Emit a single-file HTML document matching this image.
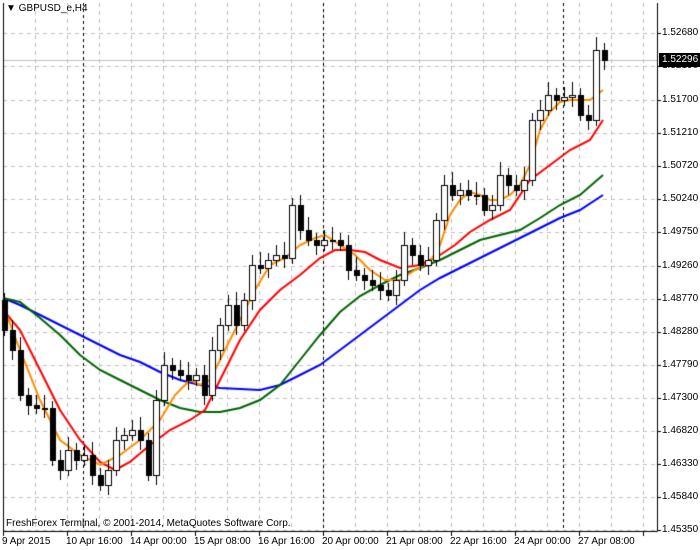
<!DOCTYPE html>
<html><head><meta charset="utf-8"><style>
body{margin:0;width:700px;height:550px;overflow:hidden;background:#fff;font-family:"Liberation Sans",sans-serif;}
canvas{position:absolute;left:0;top:0}
.t{position:absolute;font-size:10px;color:#000;white-space:nowrap;line-height:12px}
.pl{left:662px}
</style></head><body>
<canvas id="c" width="700" height="550"></canvas>
<div class="t" style="left:6px;top:3px">&#9660; GBPUSD_e,H4</div>
<div class="t pl" style="top:27px">1.52680</div>
<div class="t pl" style="top:60px">1.52190</div>
<div class="t pl" style="top:94px">1.51700</div>
<div class="t pl" style="top:127px">1.51210</div>
<div class="t pl" style="top:160px">1.50720</div>
<div class="t pl" style="top:193px">1.50240</div>
<div class="t pl" style="top:226px">1.49750</div>
<div class="t pl" style="top:260px">1.49260</div>
<div class="t pl" style="top:293px">1.48770</div>
<div class="t pl" style="top:326px">1.48280</div>
<div class="t pl" style="top:359px">1.47790</div>
<div class="t pl" style="top:392px">1.47300</div>
<div class="t pl" style="top:425px">1.46820</div>
<div class="t pl" style="top:458px">1.46330</div>
<div class="t pl" style="top:491px">1.45840</div>
<div class="t pl" style="top:524px">1.45350</div>
<div class="t" style="left:659px;top:53px;width:38px;height:14px;background:#000;color:#fff;padding-left:3px;line-height:14px">1.52296</div>
<div class="t" style="left:6px;top:518px">FreshForex Terminal, © 2001-2014, MetaQuotes Software Corp.</div>
<div class="t" style="left:2px;top:536px">9 Apr 2015</div>
<div class="t" style="left:66px;top:536px">10 Apr 16:00</div>
<div class="t" style="left:130px;top:536px">14 Apr 00:00</div>
<div class="t" style="left:194px;top:536px">15 Apr 08:00</div>
<div class="t" style="left:258px;top:536px">16 Apr 16:00</div>
<div class="t" style="left:322px;top:536px">20 Apr 00:00</div>
<div class="t" style="left:386px;top:536px">21 Apr 08:00</div>
<div class="t" style="left:450px;top:536px">22 Apr 16:00</div>
<div class="t" style="left:514px;top:536px">24 Apr 00:00</div>
<div class="t" style="left:578px;top:536px">27 Apr 08:00</div>
<script>
const c=document.getElementById('c').getContext('2d');
const L=3,R=657,T=3,B=531;
c.fillStyle='#fff';c.fillRect(0,0,700,550);
c.strokeStyle='#c0c0c0';c.lineWidth=1;c.setLineDash([4,4]);
for(let x=35;x<R;x+=32){c.beginPath();c.moveTo(x+.5,T);c.lineTo(x+.5,B);c.stroke();}
const ys=[33,66,100,133,166,199,232,266,299,332,365,398,431,464,497,530];
for(const y of ys){c.beginPath();c.moveTo(L,y+.5);c.lineTo(R,y+.5);c.stroke();}
c.strokeStyle='#000';c.setLineDash([3,3]);
for(const x of [83,323,563]){c.beginPath();c.moveTo(x+.5,T);c.lineTo(x+.5,B);c.stroke();}
c.setLineDash([]);
c.strokeStyle='#c0c0c0';c.beginPath();c.moveTo(L,60.5);c.lineTo(R,60.5);c.stroke();
c.strokeStyle='#000';c.beginPath();c.moveTo(L+.5,T);c.lineTo(L+.5,B+.5);c.lineTo(R+.5,B+.5);c.lineTo(R+.5,T);c.stroke();
for(const y of ys){c.beginPath();c.moveTo(R,y+.5);c.lineTo(R+4,y+.5);c.stroke();}
for(let x=3;x<R;x+=64){c.beginPath();c.moveTo(x+.5,B);c.lineTo(x+.5,B+5);c.stroke();}
const cl=[330,350,395,405,408,408,460,470,450,460,455,475,485,470,440,435,430,440,475,400,365,370,375,380,375,395,350,325,305,325,300,265,268,260,255,258,205,230,240,245,240,240,245,270,275,280,285,290,295,280,245,255,265,260,220,185,195,190,195,195,210,205,175,185,190,180,120,110,95,100,97,95,115,120,50,60];
const blue=[[3,298],[20,305],[40,315],[60,325],[80,335],[100,345],[120,355],[140,362],[160,372],[180,380],[200,385],[220,388],[240,389],[260,390],[280,385],[300,375],[320,365],[340,350],[360,335],[380,320],[400,305],[420,290],[440,278],[460,268],[480,258],[500,248],[520,238],[540,228],[560,218],[580,210],[603,195]];
const green=[[3,298],[20,302],[40,318],[60,335],[80,355],[100,370],[120,380],[140,390],[160,400],[180,408],[200,412],[220,412],[240,408],[260,400],[280,385],[300,360],[320,335],[340,312],[360,296],[380,285],[400,275],[420,268],[440,260],[460,250],[480,240],[500,235],[520,230],[540,218],[560,205],[580,195],[603,175]];
const red=[[3,310],[20,330],[40,370],[60,410],[80,440],[100,462],[115,470],[130,462],[150,445],[170,430],[190,420],[205,410],[220,380],[240,340],[260,310],[280,290],[300,275],[320,258],[335,250],[350,250],[365,252],[380,260],[400,268],[420,265],[440,255],[455,245],[470,232],[490,220],[510,210],[530,180],[550,165],[570,150],[590,140],[603,120]];
const orange=[[3,305],[20,350],[40,400],[60,440],[80,455],[100,465],[120,455],[140,440],[160,420],[175,395],[190,380],[200,385],[210,380],[225,350],[240,320],[255,290],[270,265],[285,258],[300,245],[315,238],[325,235],[340,245],[355,255],[370,270],[385,280],[400,280],[415,270],[430,262],[440,245],[450,215],[460,200],[470,192],[480,195],[490,200],[500,200],[510,195],[520,185],[530,165],[540,130],[550,112],[560,102],[570,100],[580,100],[590,100],[603,90]];
c.lineWidth=2;
for(const [a,col] of [[blue,'#0000ff'],[green,'#006400'],[red,'#ff0000'],[orange,'#ff8c00']]){c.strokeStyle=col;c.beginPath();a.forEach((p,i)=>{i?c.lineTo(p[0],p[1]):c.moveTo(p[0],p[1])});c.stroke();}
c.lineWidth=1;
let prev=300;
cl.forEach((cv,i)=>{const x=4+i*8;const o=prev;prev=cv;const top=Math.min(o,cv),bot=Math.max(o,cv);
 c.strokeStyle='#000';c.beginPath();c.moveTo(x+.5,top-7-(i%3)*3);c.lineTo(x+.5,bot+6+(i%2)*4);c.stroke();
 const h=Math.max(bot-top,1);
 if(cv<o){c.fillStyle='#fff';c.fillRect(x-2,top,5,h);c.strokeRect(x-2.5,top+.5,6,h);}
 else{c.fillStyle='#000';c.fillRect(x-2,top,6,h+1);}
});
</script>
</body></html>
